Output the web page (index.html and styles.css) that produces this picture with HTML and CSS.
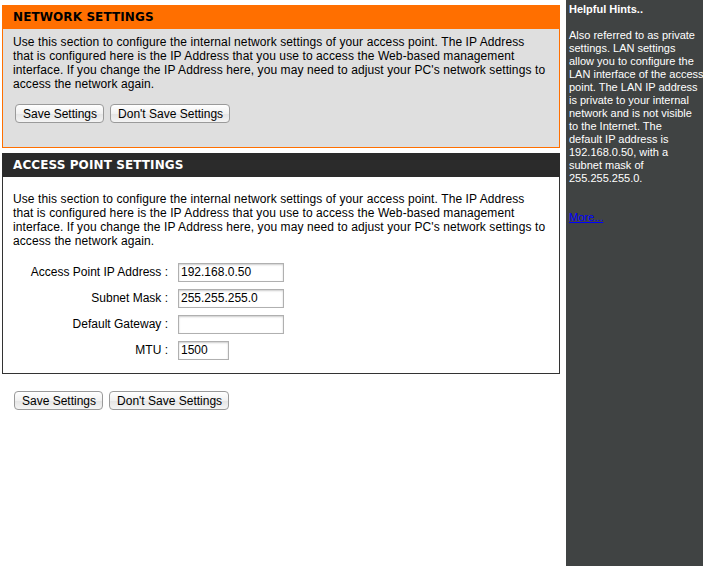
FILE: index.html
```html
<!DOCTYPE html>
<html lang="en">
<head>
    <meta charset="UTF-8">
    <title>Network Settings</title>
    <link rel="stylesheet" href="styles.css">
</head>
<body>
    <div class="page">
        <div class="main">
            <div class="box box-orange">
                <h2 class="box-title">NETWORK SETTINGS</h2>
                <div class="box-body">
                    <p>Use this section to configure the internal network settings of your access point. The IP Address<br>
                    that is configured here is the IP Address that you use to access the Web-based management<br>
                    interface. If you change the IP Address here, you may need to adjust your PC's network settings to<br>
                    access the network again.</p>
                    <div class="buttons">
                        <button class="btn" type="button">Save Settings</button>
                        <button class="btn" type="button">Don't Save Settings</button>
                    </div>
                </div>
            </div>

            <div class="box box-dark">
                <h2 class="box-title">ACCESS POINT SETTINGS</h2>
                <div class="box-body">
                    <p>Use this section to configure the internal network settings of your access point. The IP Address<br>
                    that is configured here is the IP Address that you use to access the Web-based management<br>
                    interface. If you change the IP Address here, you may need to adjust your PC's network settings to<br>
                    access the network again.</p>
                    <div class="form">
                        <div class="row">
                            <label for="ipaddr">Access Point IP Address :</label>
                            <input type="text" id="ipaddr" value="192.168.0.50">
                        </div>
                        <div class="row">
                            <label for="netmask">Subnet Mask :</label>
                            <input type="text" id="netmask" value="255.255.255.0">
                        </div>
                        <div class="row">
                            <label for="gateway">Default Gateway :</label>
                            <input type="text" id="gateway" value="">
                        </div>
                        <div class="row">
                            <label for="mtu">MTU :</label>
                            <input type="text" id="mtu" class="short" value="1500">
                        </div>
                    </div>
                </div>
            </div>

            <div class="buttons buttons-bottom">
                <button class="btn" type="button">Save Settings</button>
                <button class="btn" type="button">Don't Save Settings</button>
            </div>
        </div>

        <div class="hints">
            <h3>Helpful Hints..</h3>
            <p>Also referred to as private<br>
            settings. LAN settings<br>
            allow you to configure the<br>
            LAN interface of the access<br>
            point. The LAN IP address<br>
            is private to your internal<br>
            network and is not visible<br>
            to the Internet. The<br>
            default IP address is<br>
            192.168.0.50, with a<br>
            subnet mask of<br>
            255.255.255.0.</p>
            <a href="#" class="more">More...</a>
        </div>
    </div>
</body>
</html>
```

FILE: styles.css
```css
body {
    margin: 0;
    font-family: "Liberation Sans", Arial, sans-serif;
    font-size: 12px;
    color: #000;
    background: #fff;
}

.page {
    display: flex;
    min-height: 566px;
}

.main {
    width: 558px;
    padding: 5px 6px 0 2px;
}

.box {
    margin-bottom: 5px;
}

.box-title {
    margin: 0;
    height: 24px;
    line-height: 25px;
    padding-left: 11px;
    font-family: "DejaVu Sans", Verdana, sans-serif;
    font-size: 12px;
    font-weight: bold;
    letter-spacing: 0.1px;
}

.box-orange .box-title {
    background: #ff6f00;
    color: #000;
}

.box-orange .box-body {
    background: #dfdfdf;
    border: 1px solid #ff6f00;
    border-top: none;
    height: 118px;
}

.box-dark .box-title {
    background: #2b2b2b;
    color: #fff;
}

.box-dark .box-body {
    background: #fff;
    border: 1px solid #333;
    border-top: none;
    height: 196px;
}

.box-body p {
    margin: 0;
    padding: 6px 9px 0 10px;
    line-height: 14px;
    letter-spacing: 0.1px;
}

.box-dark .box-body p {
    padding-top: 15px;
}

.buttons {
    display: flex;
    gap: 6px;
    padding: 13px 0 0 12px;
}

.buttons-bottom {
    padding: 12px 0 0 12px;
}

.btn {
    font-family: "Liberation Sans", Arial, sans-serif;
    font-size: 12px;
    height: 19px;
    padding: 0 6px 0 7px;
    border: 1px solid #9a9a9a;
    border-radius: 4px;
    background: linear-gradient(#ffffff, #f1f1f1 50%, #e4e4e4 51%, #f4f4f4);
    color: #000;
}

.form {
    padding-top: 11px;
}

.row {
    display: flex;
    align-items: center;
    height: 26px;
}

.row label {
    width: 165px;
    text-align: right;
    margin-right: 10px;
}

.row input {
    width: 100px;
    height: 15px;
    padding: 1px 2px;
    border: 1px solid #b0b0b0;
    box-shadow: inset 0 1px 2px #ccc;
    font-family: "Liberation Sans", Arial, sans-serif;
    font-size: 12px;
}

.row input.short {
    width: 45px;
}

.hints {
    width: 134px;
    padding-left: 3px;
    background: #404343;
    color: #fff;
    font-size: 11px;
    line-height: 13px;
    white-space: nowrap;
}

.hints h3 {
    margin: 3px 0 0;
    font-size: 11px;
    font-weight: bold;
    line-height: 13px;
}

.hints p {
    margin: 13px 0 0;
}

.more {
    display: inline-block;
    margin-top: 26px;
    color: #0000ff;
}
```
